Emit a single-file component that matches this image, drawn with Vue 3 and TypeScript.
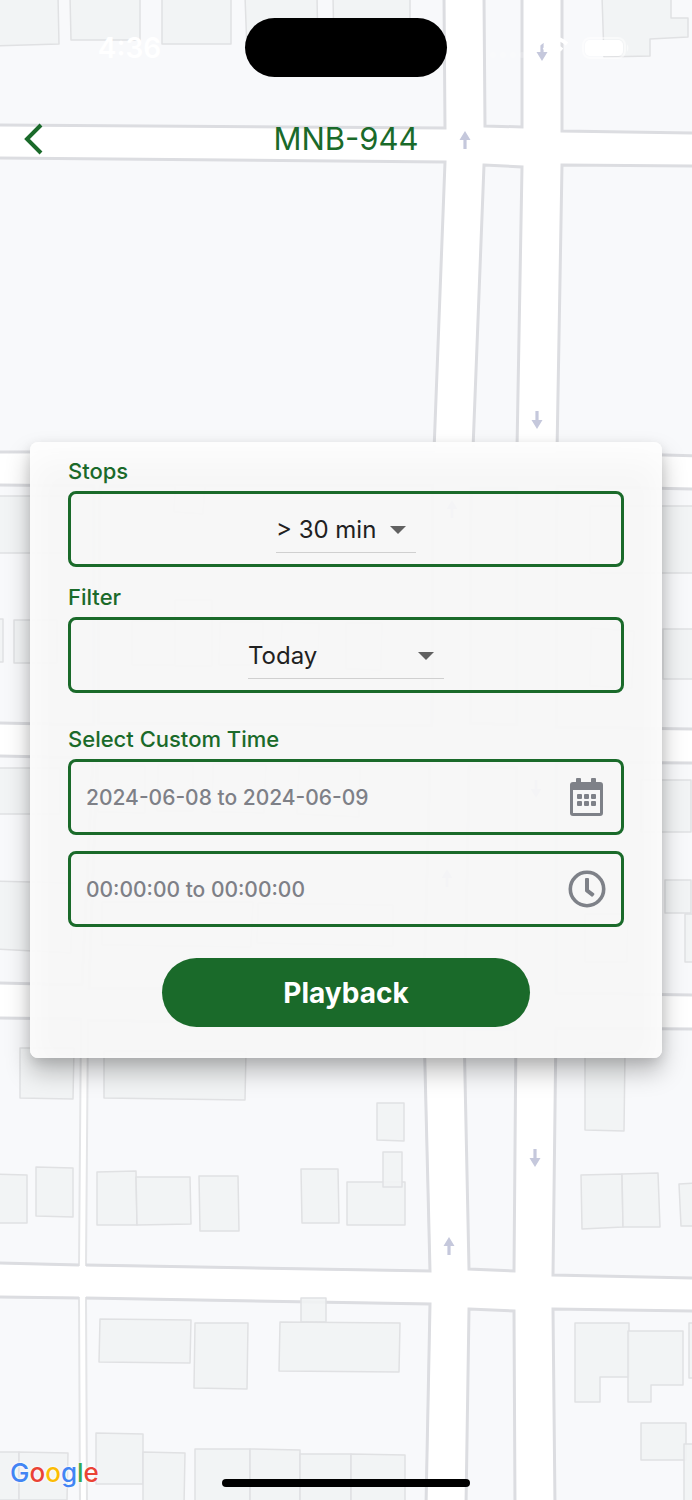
<script setup lang="ts">
import { ref } from 'vue'

interface Arrow {
  x: number
  y: number
  down: boolean
}

const stops = ref('> 30 min')
const filter = ref('Today')
const dateRange = ref('2024-06-08 to 2024-06-09')
const timeRange = ref('00:00:00 to 00:00:00')

const stopOptions: string[] = ['> 5 min', '> 10 min', '> 30 min']
const filterOptions: string[] = ['Today', 'Yesterday', 'Custom']

const blocks: string[] = [
  '-5,-5 444,-5 445,127 -5,124',
  '484,-5 522,-5 522,126 485,125',
  '562,-5 697,-5 697,132 562,130',
  '-5,157 445,161 434,450 -5,451',
  '484,164 522,166 517,448 473,448',
  '562,164 697,165 697,455 557,451',
  '-5,484 94,485 94,724 -5,722',
  '100,485 433,484 432,725 98,722',
  '471,487 517,487 517,724 470,722',
  '557,485 697,488 697,728 556,726',
  '-5,755 93,757 82,984 -5,982',
  '97,757 430,765 424,990 89,987',
  '469,765 517,767 516,990 465,990',
  '556,761 697,762 697,994 556,992',
  '464,1028 516,1028 514,1270 469,1268',
  '556,1027 697,1028 697,1277 553,1274',
  '469,1308 514,1310 515,1505 466,1505',
  '553,1308 697,1310 697,1505 555,1505',
]

const lotsByAlley: string[] = [
  '-5,1017 81,1018 79,1264 -5,1262',
  '88,1019 424,1026 430,1270 86,1264',
  '-5,1296 79,1297 80,1505 -5,1505',
  '86,1297 430,1303 426,1505 87,1505',
]

const streetEdges: string[] = [
  'M-5 1017L81 1018M-5 1262L79 1264',
  'M88 1019L424 1026L430 1270L86 1264',
  'M-5 1296L79 1297M86 1297L430 1303L426 1505',
]

const buildings: string[] = [
  '-5,-5 58,-5 59,43 -5,45',
  '70,-5 140,-5 140,39 71,39',
  '162,-5 231,-5 231,43 162,43',
  '245,-5 317,-5 318,50 247,50',
  '333,-5 410,-5 410,50 334,50',
  '602,-5 671,-5 671,17 688,17 688,36 650,38 650,55 604,56',
  '-5,495 65,495 65,552 -5,552',
  '590,505 697,505 697,572 590,572',
  '175,484 205,485 203,513 174,511',
  '-5,618 3,618 3,661 -5,661',
  '14,619 57,619 57,662 14,662',
  '132,620 175,620 175,664 132,664',
  '175,599 212,599 212,665 175,665',
  '220,621 263,621 263,664 219,664',
  '282,621 319,622 318,668 280,667',
  '346,622 382,622 381,669 346,668',
  '591,627 634,630 632,687 590,685',
  '663,628 697,628 697,678 663,678',
  '-5,767 60,767 60,813 -5,813',
  '98,765 145,765 145,812 98,811',
  '158,764 193,764 193,810 157,810',
  '213,763 266,764 264,812 212,811',
  '299,765 360,767 359,816 297,813',
  '641,779 691,779 691,831 641,831',
  '-5,880 73,882 71,952 -5,948',
  '102,901 253,901 251,946 102,944',
  '258,902 393,904 393,945 257,942',
  '585,913 628,913 627,961 585,961',
  '665,879 691,879 691,912 665,912',
  '685,913 697,913 697,961 685,961',
  '20,1047 74,1047 73,1098 20,1097',
  '104,1050 246,1050 245,1099 104,1097',
  '585,1052 625,1052 624,1130 585,1129',
  '377,1102 404,1102 404,1140 377,1139',
  '347,1181 405,1181 405,1224 347,1224',
  '383,1151 402,1151 402,1186 383,1186',
  '581,1174 622,1173 623,1226 582,1228',
  '622,1173 658,1172 660,1226 623,1226',
  '679,1183 697,1182 697,1225 681,1225',
  '-5,1173 27,1174 27,1222 -5,1222',
  '36,1166 73,1167 73,1216 36,1215',
  '97,1171 136,1170 137,1224 97,1224',
  '136,1176 190,1176 191,1223 137,1224',
  '199,1175 238,1175 239,1230 200,1230',
  '301,1168 338,1168 339,1222 302,1222',
  '100,1318 191,1319 190,1362 99,1361',
  '195,1322 248,1322 247,1388 194,1387',
  '301,1297 326,1297 326,1321 301,1321',
  '280,1321 400,1322 399,1371 279,1370',
  '575,1322 629,1322 629,1376 600,1376 600,1401 575,1401',
  '628,1330 683,1330 683,1384 651,1384 651,1401 628,1401',
  '689,1322 697,1322 697,1377 689,1377',
  '641,1422 686,1422 686,1459 641,1459',
  '684,1443 697,1443 697,1505 684,1505',
  '96,1432 143,1433 143,1483 96,1483',
  '143,1451 185,1452 184,1505 143,1505',
  '-5,1451 19,1451 19,1499 -5,1499',
  '19,1451 68,1452 67,1499 19,1499',
  '195,1448 250,1448 250,1505 195,1505',
  '250,1448 300,1449 300,1505 250,1505',
  '300,1453 351,1453 351,1505 300,1505',
  '351,1453 405,1454 405,1505 351,1505',
]

const arrows: Arrow[] = [
  { x: 542, y: 51, down: true },
  { x: 465, y: 139, down: false },
  { x: 537, y: 419, down: true },
  { x: 452, y: 508, down: false },
  { x: 536, y: 788, down: true },
  { x: 447, y: 877, down: false },
  { x: 535, y: 1157, down: true },
  { x: 449, y: 1245, down: false },
]

const arrowTransform = (a: Arrow): string => `translate(${a.x} ${a.y})${a.down ? ' rotate(180)' : ''}`
</script>

<template>
  <div class="page">
    <svg class="map" viewBox="0 -1 692 1500" preserveAspectRatio="xMidYMid slice" aria-hidden="true">
      <polygon v-for="p in blocks" :key="p" class="block" :points="p" />
      <polygon v-for="p in lotsByAlley" :key="p" class="lot" :points="p" />
      <path v-for="d in streetEdges" :key="d" class="edge" :d="d" />
      <polygon v-for="p in buildings" :key="p" class="building" :points="p" />
      <path
        v-for="a in arrows"
        :key="a.y"
        class="arrow"
        :transform="arrowTransform(a)"
        d="M0 -9L5.500 0H1.600V9H-1.600V0H-5.500Z"
      />
    </svg>

    <header class="top">
      <div class="status">
        <span class="clock">4:36</span>
        <span class="island"></span>
        <div class="indicators">
          <svg class="signal" viewBox="0 0 36 24" aria-hidden="true">
            <circle cx="4" cy="19" r="3" />
            <circle cx="14" cy="19" r="3" />
            <circle cx="24" cy="19" r="3" />
            <circle cx="33" cy="19" r="3" />
          </svg>
          <svg class="wifi" viewBox="0 0 32 24" aria-hidden="true">
            <path d="M2 8Q16 -4 30 8M7 14Q16 6 25 14" />
            <circle cx="16" cy="19" r="3" />
          </svg>
          <svg class="battery" viewBox="0 0 50 24" aria-hidden="true">
            <rect class="shell" x="2" y="2" width="42" height="20" rx="7" />
            <rect x="4" y="4" width="38" height="16" rx="5" />
            <path class="nub" d="M46 8Q49 12 46 16Z" />
          </svg>
        </div>
      </div>
      <div class="bar">
        <button class="back" type="button" aria-label="Back">
          <svg viewBox="0 0 20 32" aria-hidden="true"><path d="M17 2L3 16L17 30" /></svg>
        </button>
        <h1>MNB-944</h1>
      </div>
    </header>

    <form class="card" @submit.prevent>
      <label class="caption" for="stops">Stops</label>
      <div class="field centered">
        <div class="drop">
          <select id="stops" v-model="stops">
            <option v-for="o in stopOptions" :key="o">{{ o }}</option>
          </select>
          <svg class="caret" viewBox="0 0 16 8" aria-hidden="true"><path d="M0 0H16L8 8Z" /></svg>
        </div>
      </div>

      <label class="caption" for="filter">Filter</label>
      <div class="field centered">
        <div class="drop wide">
          <select id="filter" v-model="filter">
            <option v-for="o in filterOptions" :key="o">{{ o }}</option>
          </select>
          <svg class="caret" viewBox="0 0 16 8" aria-hidden="true"><path d="M0 0H16L8 8Z" /></svg>
        </div>
      </div>

      <label class="caption custom" for="dates">Select Custom Time</label>
      <div class="field">
        <input id="dates" v-model="dateRange" type="text" readonly />
        <svg class="icon" viewBox="0 0 38 40" aria-hidden="true">
          <path
            fill-rule="evenodd"
            d="M9 1H12Q13 1 13 2V5H23V2Q23 1 24 1H27Q28 1 28 2V5H32Q35 5 35 8V36Q35 39 32 39H5Q2 39 2 36V8Q2 5 5 5H8V2Q8 1 9 1ZM5 13V36H32V13Z"
          />
          <rect x="9" y="17" width="5" height="5" rx="1" />
          <rect x="16" y="17" width="5" height="5" rx="1" />
          <rect x="23" y="17" width="5" height="5" rx="1" />
          <rect x="9" y="24" width="5" height="5" rx="1" />
          <rect x="16" y="24" width="5" height="5" rx="1" />
          <rect x="23" y="24" width="5" height="5" rx="1" />
        </svg>
      </div>
      <div class="field second">
        <input v-model="timeRange" type="text" readonly aria-label="Custom time range" />
        <svg class="icon" viewBox="0 0 38 40" aria-hidden="true">
          <circle class="ring" cx="19" cy="20" r="16.7" />
          <path d="M17 10Q17 9 18 9H20Q21 9 21 10V20.5L26 24.2Q26.8 24.9 26.2 25.7L25 27.2Q24.3 28 23.5 27.4L17.700 23Q17 22.5 17 21.5Z" />
        </svg>
      </div>

      <button class="play" type="submit">Playback</button>
    </form>

    <footer class="bottom">
      <span class="logo"><span class="b">G</span><span class="r">o</span><span class="y">o</span><span class="b">g</span><span class="g">l</span><span class="r">e</span></span>
      <span class="home"></span>
    </footer>
  </div>
</template>

<style>
body {
  margin: 0;
}
</style>

<style scoped>
.page {
  --green: #1a6a2a;
  position: relative;
  display: grid;
  grid-template-rows: 1fr auto 1fr;
  grid-template-columns: minmax(0, 1fr);
  min-height: 100vh;
  overflow: hidden;
  background: #fff;
  font-family: Inter, "Liberation Sans", sans-serif;
}

.map {
  position: absolute;
  inset: 0;
  width: 100%;
  height: 100%;
}

.block {
  fill: #f8f9fb;
  stroke: #dcdde1;
  stroke-width: 3;
}

.lot {
  fill: #f8f9fb;
  stroke: #e4e5e7;
  stroke-width: 2;
}

.edge {
  fill: none;
  stroke: #dcdde1;
  stroke-width: 3;
}

.building {
  fill: #f1f3f4;
  fill-opacity: 0.9;
  stroke: #e0e1e3;
  stroke-width: 1.5;
  stroke-linejoin: round;
}

.arrow {
  fill: #c5c8dc;
}

.top,
.card,
.bottom {
  position: relative;
}

.status {
  display: grid;
  grid-template-columns: 1fr auto 1fr;
  align-items: center;
  padding-top: 18px;
}

.clock {
  padding-left: 14px;
  color: #fff;
  font-size: 28px;
  font-weight: 600;
  line-height: 32px;
  text-align: center;
}

.island {
  width: 202px;
  height: 59px;
  border-radius: 30px;
  background: #000;
}

.indicators {
  display: flex;
  justify-content: flex-end;
  gap: 12px;
  padding-right: 61px;
}

.indicators svg {
  height: 24px;
  fill: #fff;
}

.signal {
  width: 36px;
  opacity: 0.2;
}

.wifi {
  width: 32px;
}

.wifi path {
  fill: none;
  stroke: #fff;
  stroke-width: 4;
}

.battery {
  width: 50px;
}

.battery .shell {
  fill: none;
  stroke: #fff;
  stroke-width: 2;
  opacity: 0.5;
}

.battery .nub {
  opacity: 0.5;
}

.bar {
  display: grid;
  grid-template-columns: 1fr auto 1fr;
  align-items: center;
  padding: 42px 24px 0;
}

.back {
  justify-self: start;
  width: 20px;
  height: 32px;
  padding: 0;
  border: 0;
  background: none;
}

.back svg {
  display: block;
  width: 20px;
  height: 32px;
}

.back path {
  fill: none;
  stroke: var(--green);
  stroke-width: 4;
}

h1 {
  margin: 0;
  color: var(--green);
  font-size: 31px;
  font-weight: 400;
  line-height: 40px;
}

.card {
  display: flex;
  flex-direction: column;
  margin: 0 30px;
  padding: 15px 38px 31px;
  border-radius: 8px;
  background: rgba(247, 247, 247, 0.95);
  box-shadow:
    0 14px 24px rgba(0, 0, 0, 0.25),
    0 4px 12px rgba(0, 0, 0, 0.1),
    inset 0 16px 32px rgba(255, 255, 255, 0.9);
}

.caption {
  margin-bottom: 6px;
  color: var(--green);
  font-size: 22px;
  font-weight: 500;
  line-height: 28px;
}

.field + .caption {
  margin-top: 16px;
}

.field + .caption.custom {
  margin-top: 32px;
}

.field {
  display: flex;
  align-items: center;
  box-sizing: border-box;
  height: 76px;
  padding: 0 15px;
  border: 3px solid var(--green);
  border-radius: 8px;
}

.field.centered {
  justify-content: center;
}

.field.second {
  margin-top: 16px;
}

.drop {
  position: relative;
  width: 140px;
  border-bottom: 1px solid #d0d0d0;
}

.drop.wide {
  width: 196px;
}

select {
  display: block;
  box-sizing: border-box;
  width: 100%;
  height: 47px;
  margin: 0;
  padding: 2px 0 0;
  border: 0;
  outline: 0;
  appearance: none;
  background: none;
  color: #212121;
  font: 400 24px Inter, "Liberation Sans", sans-serif;
}

.caret {
  position: absolute;
  top: 21px;
  right: 10px;
  width: 16px;
  height: 8px;
  fill: #616161;
  pointer-events: none;
}

input {
  flex: 1;
  min-width: 0;
  padding: 0;
  border: 0;
  outline: 0;
  background: none;
  color: #7e8087;
  font: 500 21px Inter, "Liberation Sans", sans-serif;
}

.icon {
  width: 38px;
  height: 40px;
  fill: #7e8188;
}

.icon .ring {
  fill: none;
  stroke: #7e8188;
  stroke-width: 3.6;
}

.play {
  align-self: center;
  width: 368px;
  max-width: 100%;
  height: 69px;
  margin-top: 31px;
  border: 0;
  border-radius: 35px;
  background: var(--green);
  color: #fff;
  font: 700 28px Inter, "Liberation Sans", sans-serif;
}

.bottom {
  display: grid;
  grid-template-columns: 1fr auto 1fr;
  align-items: end;
  padding: 0 0 13px;
}

.logo {
  padding-left: 10px;
  font-size: 26px;
  font-weight: 500;
  line-height: 28px;
  text-shadow: 0 0 2px #fff, 0 0 3px #fff;
}

.logo .b {
  color: #4285f4;
}

.logo .r {
  color: #ea4335;
}

.logo .y {
  color: #fbbc04;
}

.logo .g {
  color: #34a853;
}

.home {
  width: 248px;
  height: 8px;
  border-radius: 4px;
  background: #000;
}
</style>
